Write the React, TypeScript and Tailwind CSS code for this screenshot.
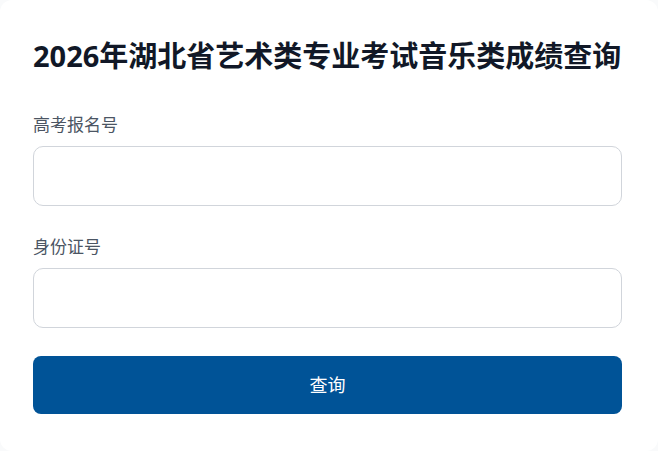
export default function App() {
  return (
    <div className="min-h-screen bg-gray-50" style={{ fontFamily: '"Noto Sans", "Noto Sans CJK SC", sans-serif' }}>
      <div className="w-[658px] h-[451px] bg-white rounded-xl pl-[33px] pr-[36px] pt-[36px]">
        <h1 className="text-[29px] leading-[40px] font-bold text-[#111827] whitespace-nowrap">
          2026年湖北省艺术类专业考试音乐类成绩查询
        </h1>
        <form className="mt-[37px] flex flex-col" onSubmit={(e) => e.preventDefault()}>
          <label className="text-[17px] leading-6 text-[#4b5563]">高考报名号</label>
          <input
            type="text"
            className="mt-[9px] h-[60px] w-full rounded-[10px] border border-[#d1d5db] px-4 text-base outline-none"
          />
          <label className="mt-[29px] text-[17px] leading-6 text-[#4b5563]">身份证号</label>
          <input
            type="text"
            className="mt-[9px] h-[60px] w-full rounded-[10px] border border-[#d1d5db] px-4 text-base outline-none"
          />
          <button
            type="submit"
            className="mt-[28px] h-[58px] w-full rounded-lg bg-[#005397] text-lg text-white"
          >
            查询
          </button>
        </form>
      </div>
    </div>
  );
}
